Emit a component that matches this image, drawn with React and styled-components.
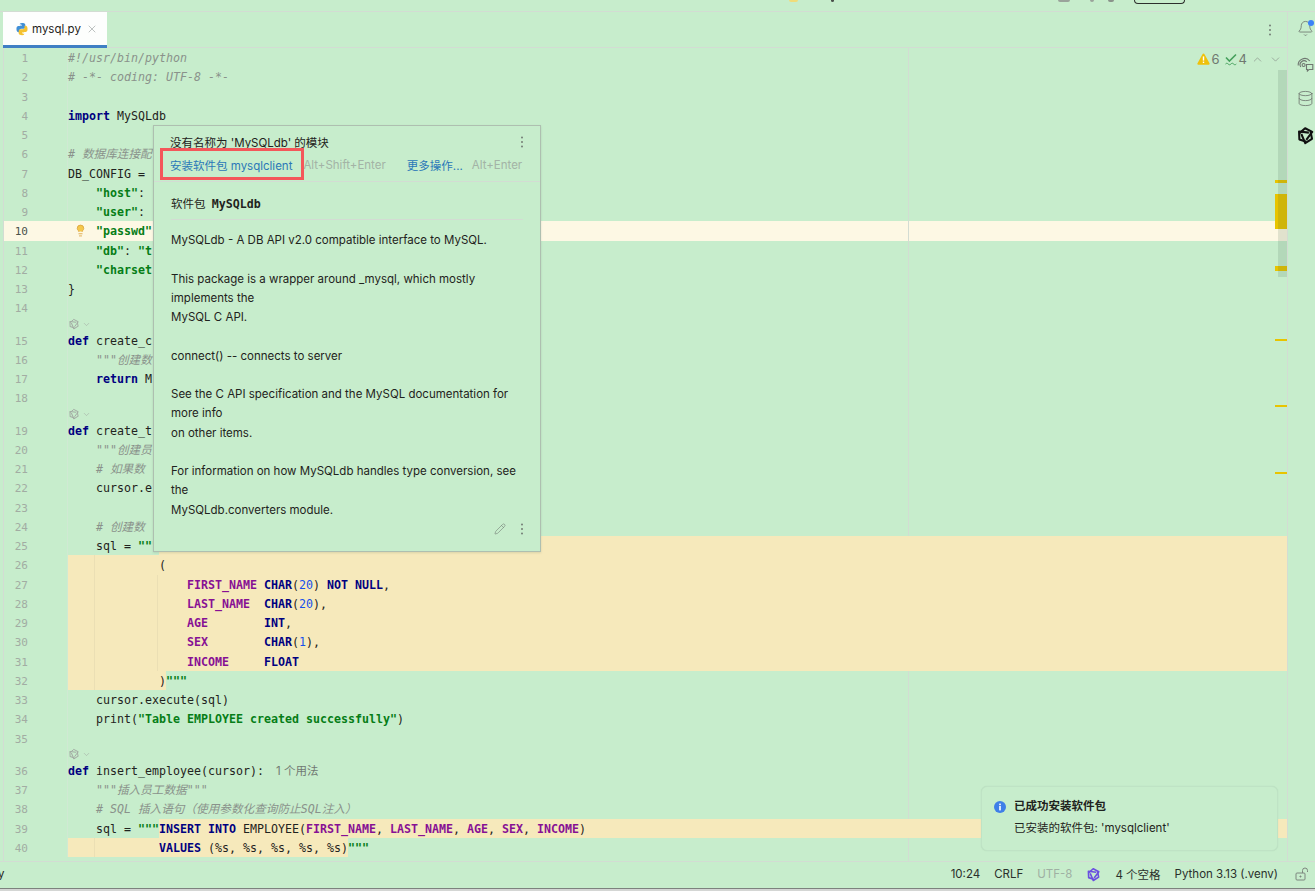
import React from "react"
import styled, { createGlobalStyle, css } from "styled-components"
import { Bell, Database, Lightbulb, Pencil, ChevronUp, ChevronDown, X } from "lucide-react"

const BG = "#c7edcc"
const LINE = "#d3dcd3"
const INJECT = "#f6e9bb"
const SANS = `Inter, "Noto Sans CJK SC", sans-serif`
const MONO = `"DejaVu Sans Mono", "Noto Sans CJK SC", monospace`

const GlobalStyle = createGlobalStyle`
  html, body {
    margin: 0;
    padding: 0;
    background: ${BG};
  }
`

const Window = styled.div`
  width: 1315px;
  height: 891px;
  display: flex;
  flex-direction: column;
  overflow: hidden;
  background: ${BG};
  color: #1f2320;
  font-family: ${SANS};
  font-size: 11.5px;
`

const TopStrip = styled.div`
  height: 11px;
  flex: none;
  display: flex;
  align-items: flex-start;
  padding-left: 789px;
  border-bottom: 1px solid ${LINE};
`

const CutOff = styled.span`
  display: block;
  flex: none;
  width: ${props => props.$w}px;
  height: ${props => props.$h}px;
  margin-left: ${props => props.$gap}px;
  background: ${props => props.$c};
  border-radius: 0 0 3px 3px;
`

const CutButton = styled.span`
  display: block;
  flex: none;
  width: 49px;
  height: 3px;
  margin-left: 20px;
  border: 1px solid #2c2f2c;
  border-top: none;
  border-radius: 0 0 8px 8px;
`

const Main = styled.div`
  flex: 1;
  min-height: 0;
  display: flex;
`

const EditorColumn = styled.div`
  flex: none;
  width: 1284px;
  margin-left: 3px;
  box-sizing: border-box;
  display: flex;
  flex-direction: column;
  border-left: 1px solid ${LINE};
  min-height: 0;
`

const TabBar = styled.div`
  height: 35px;
  flex: none;
  display: flex;
  justify-content: space-between;
  align-items: stretch;
  padding-right: 15px;
  border-bottom: 1px solid ${LINE};
`

const Tab = styled.div`
  width: 104px;
  box-sizing: border-box;
  margin-left: -1px;
  margin-bottom: -1px;
  padding: 0 9px 0 12px;
  display: flex;
  align-items: center;
  background: #fdfefd;
  border-bottom: 3px solid #3f7fc4;
`

const TabName = styled.span`
  margin-left: 3px;
  flex: 1;
`

const TabMenu = styled.div`
  display: flex;
  align-items: center;
`

const Editor = styled.div`
  position: relative;
  flex: 1;
  min-height: 0;
  overflow: hidden;
`

const Row = styled.div`
  position: relative;
  height: 19.25px;
  display: flex;
  font-family: ${MONO};
  font-size: 11.63px;
  line-height: 21px;
  white-space: pre;
  ${props => props.$caret && css`
    background: #fdf8e4;
  `}
  ${props => props.$lift && css`
    z-index: 1;
  `}
`

const Gutter = styled.div`
  flex: none;
  width: 64px;
  box-sizing: border-box;
  padding-right: 39px;
  text-align: right;
  font-size: 11px;
  color: ${props => (props.$active ? "#4a524b" : "#a2aca3")};
  border-right: 1px solid ${props => (props.$active ? "transparent" : "#d0e9d3")};
`

const guideBackground = levels => {
  if (!levels) return ""
  const stops = [27, 90].slice(0, levels)
  return css`
    background-image: ${stops
      .map(() => `linear-gradient(#ebdfb4, #ebdfb4)`)
      .join(", ")};
    background-size: 1px 100%;
    background-repeat: no-repeat;
    background-position: ${stops.map(x => `${x - 1}px 0`).join(", ")};
  `
}

const Code = styled.div`
  flex: 1;
  min-width: 0;
  display: flex;
  ${props => props.$inject && css`
    background-color: ${INJECT};
  `}
  ${props => guideBackground(props.$guides)}
`

const Fill = styled.div`
  flex: 1;
  background: ${INJECT};
`

const TOKEN_STYLES = {
  kw: css`
    color: #000080;
    font-weight: 700;
  `,
  str: css`
    color: #067d17;
    font-weight: 700;
  `,
  com: css`
    color: #8a928b;
    font-style: italic;
  `,
  col: css`
    color: #871094;
    font-weight: 700;
  `,
  num: css`
    color: #1750eb;
  `,
}

const Tok = styled.span`
  ${props => TOKEN_STYLES[props.$k]}
  ${props => props.$mark && css`
    background-color: ${INJECT};
  `}
  ${props => guideBackground(props.$guides)}
`

const Usage = styled.span`
  margin-left: 12px;
  font-family: ${SANS};
  font-size: 11.5px;
  color: #727a73;
`

const Bulb = styled.span`
  position: absolute;
  left: 70px;
  top: 3px;
  display: flex;
`

const HintRow = styled.div`
  height: 13px;
  display: flex;
`

const HintGutter = styled.div`
  flex: none;
  width: 64px;
  box-sizing: border-box;
  border-right: 1px solid #d0e9d3;
`

const HintIcon = styled.div`
  display: flex;
  align-items: center;
  gap: 2px;
  color: #a3aca4;
`

const MarginGuide = styled.div`
  position: absolute;
  left: 904px;
  top: 0;
  bottom: 0;
  width: 1px;
  background: ${LINE};
`

const StripeMark = styled.div`
  position: absolute;
  left: 1271px;
  right: 0;
  top: ${props => props.$top}px;
  height: ${props => props.$h}px;
  background: #e8c400;
  z-index: 2;
`

const ScrollThumb = styled.div`
  position: absolute;
  right: 0;
  top: 22px;
  width: 9px;
  height: 207px;
  background: rgba(60, 90, 70, 0.14);
  z-index: 3;
`

const Inspections = styled.div`
  position: absolute;
  top: 3px;
  right: 5px;
  display: flex;
  align-items: center;
  height: 16px;
  font-size: 13px;
  color: #6f7870;
  z-index: 3;
`

const Count = styled.span`
  margin: 0 ${props => props.$after}px 0 2px;
`

const Arrow = styled.span`
  display: flex;
  margin-left: ${props => props.$gap}px;
  color: #8a938b;
`

const Popup = styled.div`
  position: absolute;
  left: 149px;
  top: 77px;
  z-index: 4;
  width: 388px;
  height: 427px;
  box-sizing: border-box;
  background: ${BG};
  border: 1px solid #aebfb0;
  box-shadow: 0 1px 2px rgba(60, 80, 60, 0.15);
`

const PopupHead = styled.div`
  height: 56px;
  box-sizing: border-box;
  padding: 6px 16px 0 16px;
  border-bottom: 1px solid ${LINE};
`

const TitleLine = styled.div`
  display: flex;
  justify-content: space-between;
  align-items: center;
  height: 19px;
`

const ActionLine = styled.div`
  display: flex;
  align-items: center;
  height: 19px;
  margin-top: 4px;
  white-space: nowrap;
`

const ActionLink = styled.span`
  color: #2b78b8;
  margin-left: ${props => props.$gap || 0}px;
`

const Shortcut = styled.span`
  color: #a3b3a6;
  margin-left: ${props => props.$gap}px;
`

const Annotation = styled.div`
  position: absolute;
  left: 6px;
  top: 22px;
  width: 144px;
  height: 32px;
  box-sizing: border-box;
  border: 3px solid #f4575a;
`

const PopupDoc = styled.div`
  padding: 13px 17px 0 17px;
`

const DocHeading = styled.div`
  height: 24px;
  line-height: 19px;
  border-bottom: 1px solid ${LINE};
`

const DocModule = styled.span`
  margin-left: 3px;
  font-family: ${MONO};
  font-weight: 700;
  font-size: 11.63px;
`

const DocBody = styled.div`
  margin-top: 11px;
  width: 352px;
  line-height: 19.25px;
  white-space: pre-line;
`

const PopupFoot = styled.div`
  display: flex;
  justify-content: flex-end;
  align-items: center;
  gap: 14px;
  height: 19px;
  padding-right: 16px;
  color: #747d75;
`

const Notification = styled.div`
  position: absolute;
  left: 977px;
  bottom: 10px;
  z-index: 4;
  width: 297px;
  height: 65px;
  box-sizing: border-box;
  padding: 11px 12px;
  display: flex;
  gap: 8px;
  background: ${BG};
  border: 1px solid #bfe3c5;
  border-radius: 6px;
  box-shadow: 0 0 1px rgba(90, 130, 100, 0.2);
`

const NotifyBody = styled.div`
  display: flex;
  flex-direction: column;
  gap: 5px;
  line-height: 17px;
`

const NotifyTitle = styled.div`
  font-weight: 700;
`

const Sidebar = styled.div`
  flex: 1;
  box-sizing: border-box;
  border-left: 1px solid ${LINE};
  display: flex;
  flex-direction: column;
  align-items: center;
  padding: 8px 0 0 7px;
  gap: 18.5px;
  color: #6f7770;
`

const BellWrap = styled.div`
  position: relative;
  display: flex;
`

const BellDot = styled.span`
  position: absolute;
  right: 0;
  top: 0;
  width: 6px;
  height: 6px;
  border-radius: 50%;
  background: #3b82f6;
`

const StatusBar = styled.div`
  height: 27px;
  flex: none;
  box-sizing: border-box;
  display: flex;
  align-items: center;
  justify-content: space-between;
  padding: 0 6px 2px 0;
  border-top: 1px solid ${LINE};
`

const Crumb = styled.span`
  margin-left: -2px;
`

const StatusItems = styled.div`
  display: flex;
  align-items: center;
  gap: 14px;
`

const StatusText = styled.span`
  color: ${props => (props.$muted ? "#9fb0a3" : "#2a2f2b")};
`

const LockSlot = styled.span`
  display: flex;
  margin-left: 3px;
`

const BottomEdge = styled.div`
  height: 3px;
  flex: none;
  box-sizing: border-box;
  background: #d4d6d4;
  border-top: 1px solid #7d827e;
`

const SNAKE =
  "M11.9 1.5C8.2 1.5 8.4 3.2 8.4 3.2v2.9H12v.8H6.2S2.5 6.5 2.5 12s3.2 5.4 3.2 5.4h2v-2.8s-.1-3.2 3.2-3.2h3.6s3.1.05 3.1-3V4.6s.5-3.1-5.7-3.1zM9.9 3.3a1 1 0 1 1 0 2.1 1 1 0 0 1 0-2.1z"

const PythonLogo = () => (
  <svg width="14" height="14" viewBox="0 0 24 24">
    <path fill="#3f8fd6" d={SNAKE} />
    <path fill="#f4c230" transform="rotate(180 12 12)" d={SNAKE} />
  </svg>
)

const KebabIcon = () => (
  <svg width="4" height="12" viewBox="0 0 4 12" fill="#747d75">
    <circle cx="2" cy="1.5" r="1" />
    <circle cx="2" cy="6" r="1" />
    <circle cx="2" cy="10.5" r="1" />
  </svg>
)

const WarningIcon = () => (
  <svg width="13" height="12" viewBox="0 0 13 12">
    <path d="M6.5.5c.5 0 .8.3 1 .7l5 9c.4.7 0 1.500-.8 1.500H1.300c-.8 0-1.200-.8-.8-1.500l5-9c.2-.4.5-.7 1-.7z" fill="#efc10a" />
    <rect x="5.800" y="3.400" width="1.400" height="4.200" fill="#fff" />
    <rect x="5.800" y="8.600" width="1.400" height="1.400" fill="#fff" />
  </svg>
)

const TypoCheckIcon = () => (
  <svg width="12" height="13" viewBox="0 0 12 13" fill="none" stroke="#45a05c" strokeWidth="1.600">
    <path d="M1 4.500 4.400 8 11 1.500" />
    <path d="M.5 11c1-1 1.700-1 2.700 0s1.700 1 2.700 0 1.700-1 2.700 0 1.700 1 2.700 0" strokeWidth="1" />
  </svg>
)

const InfoIcon = () => (
  <svg width="12" height="12" viewBox="0 0 12 12" style={{ flex: "none", marginTop: 3 }}>
    <circle cx="6" cy="6" r="6" fill="#3f7fe8" />
    <rect x="5.200" y="5" width="1.600" height="4.400" fill="#fff" />
    <rect x="5.200" y="2.600" width="1.600" height="1.600" fill="#fff" />
  </svg>
)

// one blade repeated three times makes the pinwheel of the plugin logo
const LingmaIcon = ({ size = 19, color = "#111", weight = 2.6 }) => (
  <svg width={size} height={size} viewBox="0 0 24 24" fill="none" stroke={color} strokeWidth={weight} strokeLinejoin="round">
    {[0, 120, 240].map(angle => (
      <path key={angle} d="M4.500 9 11.500 2.800 20.500 7.500 13 17.500" transform={`rotate(${angle} 12 12)`} />
    ))}
  </svg>
)

const ChatIcon = () => (
  <svg width="17" height="16" viewBox="0 0 17 16" fill="none" stroke="currentColor" strokeWidth="1.100">
    <path d="M1.200 9.500A6.500 6.500 0 0 1 12.800 5" />
    <path d="M3.800 11A4 4 0 0 1 9.800 5.800" />
    <circle cx="6.600" cy="9" r="1.500" />
    <path d="M9.500 8.500h6.300v5H12l-1.600 1.500v-1.500H9.500z" />
  </svg>
)

const LockIcon = () => (
  <svg width="14" height="14" viewBox="0 0 14 14" fill="none" stroke="#7d867e" strokeWidth="1">
    <rect x="1" y="6" width="9" height="7" rx="1" />
    <path d="M7.500 6V3.500a2.500 2.500 0 0 1 5 0V5" />
    <circle cx="5.500" cy="9.500" r=".6" fill="#7d867e" />
  </svg>
)

const t = (text, k, extra) => ({ text, k, ...extra })

const rows = [
  { n: 1, parts: [t("#!/usr/bin/python", "com")] },
  { n: 2, parts: [t("# -*- coding: UTF-8 -*-", "com")] },
  { n: 3 },
  { n: 4, parts: [t("import", "kw"), t(" MySQLdb")] },
  { n: 5 },
  { n: 6, parts: [t("# 数据库连接配", "com")] },
  { n: 7, parts: [t("DB_CONFIG =")] },
  { n: 8, parts: [t("    "), t('"host"', "str"), t(":")] },
  { n: 9, parts: [t("    "), t('"user"', "str"), t(":")] },
  { n: 10, caret: true, parts: [t("    "), t('"passwd"', "str")] },
  { n: 11, parts: [t("    "), t('"db"', "str"), t(": "), t('"t', "str")] },
  { n: 12, parts: [t("    "), t('"charset', "str")] },
  { n: 13, parts: [t("}")] },
  { n: 14 },
  { hint: true },
  { n: 15, parts: [t("def", "kw"), t(" create_c")] },
  { n: 16, parts: [t("    "), t('"""创建数', "com")] },
  { n: 17, parts: [t("    "), t("return", "kw"), t(" M")] },
  { n: 18 },
  { hint: true },
  { n: 19, parts: [t("def", "kw"), t(" create_t")] },
  { n: 20, parts: [t("    "), t('"""创建员', "com")] },
  { n: 21, parts: [t("    "), t("# 如果数", "com")] },
  { n: 22, parts: [t("    cursor.e")] },
  { n: 23 },
  { n: 24, parts: [t("    "), t("# 创建数", "com")] },
  { n: 25, fill: true, parts: [t("    sql = "), t('"""', "str")] },
  { n: 26, inject: true, guides: 1, parts: [t("             (")] },
  {
    n: 27,
    inject: true,
    guides: 2,
    parts: [
      t("                 "),
      t("FIRST_NAME", "col"),
      t(" "),
      t("CHAR", "kw"),
      t("("),
      t("20", "num"),
      t(") "),
      t("NOT NULL", "kw"),
      t(","),
    ],
  },
  {
    n: 28,
    inject: true,
    guides: 2,
    parts: [t("                 "), t("LAST_NAME", "col"), t("  "), t("CHAR", "kw"), t("("), t("20", "num"), t("),")],
  },
  { n: 29, inject: true, guides: 2, parts: [t("                 "), t("AGE", "col"), t("        "), t("INT", "kw"), t(",")] },
  {
    n: 30,
    inject: true,
    guides: 2,
    parts: [t("                 "), t("SEX", "col"), t("        "), t("CHAR", "kw"), t("("), t("1", "num"), t("),")],
  },
  { n: 31, inject: true, guides: 2, parts: [t("                 "), t("INCOME", "col"), t("     "), t("FLOAT", "kw")] },
  { n: 32, parts: [t("             )", null, { mark: true, guides: 1 }), t('"""', "str")] },
  { n: 33, parts: [t("    cursor.execute(sql)")] },
  { n: 34, parts: [t("    print("), t('"Table EMPLOYEE created successfully"', "str"), t(")")] },
  { n: 35 },
  { hint: true },
  { n: 36, usage: "1 个用法", parts: [t("def", "kw"), t(" insert_employee(cursor):")] },
  { n: 37, parts: [t("    "), t('"""插入员工数据"""', "com")] },
  { n: 38, parts: [t("    "), t("# SQL 插入语句（使用参数化查询防止SQL注入）", "com")] },
  {
    n: 39,
    parts: [t("    sql = "), t('"""', "str")],
    fill: [
      t("INSERT INTO", "kw"),
      t(" EMPLOYEE("),
      t("FIRST_NAME", "col"),
      t(", "),
      t("LAST_NAME", "col"),
      t(", "),
      t("AGE", "col"),
      t(", "),
      t("SEX", "col"),
      t(", "),
      t("INCOME", "col"),
      t(")"),
    ],
  },
  {
    n: 40,
    parts: [
      t("    ", null, { mark: true, guides: 1 }),
      t("         ", null, { mark: true }),
      t("VALUES", "kw", { mark: true }),
      t(" (%s, %s, %s, %s, %s)", null, { mark: true }),
      t('"""', "str"),
    ],
  },
]

const stripeMarks = [
  [132, 3],
  [146, 35],
  [218, 5],
  [291, 2],
  [357, 2],
  [424, 2],
]

const docText = `MySQLdb - A DB API v2.0 compatible interface to MySQL.

This package is a wrapper around _mysql, which mostly implements the
MySQL C API.

connect() -- connects to server

See the C API specification and the MySQL documentation for more info
on other items.

For information on how MySQLdb handles type conversion, see the
MySQLdb.converters module.`

const renderParts = parts =>
  parts.map((part, i) => (
    <Tok key={i} $k={part.k} $mark={part.mark} $guides={part.guides}>
      {part.text}
    </Tok>
  ))

const CodeRow = ({ row }) => {
  if (row.hint) {
    return (
      <HintRow>
        <HintGutter />
        <HintIcon>
          <LingmaIcon size={12} color="#a3aca4" weight={2} />
          <ChevronDown size={9} strokeWidth={1.5} />
        </HintIcon>
      </HintRow>
    )
  }
  return (
    <Row $caret={row.caret} $lift={row.inject || row.fill}>
      <Gutter $active={row.caret}>{row.n}</Gutter>
      <Code $inject={row.inject} $guides={row.guides}>
        {row.parts && renderParts(row.parts)}
        {row.usage && <Usage>{row.usage}</Usage>}
        {row.fill && <Fill>{Array.isArray(row.fill) && renderParts(row.fill)}</Fill>}
      </Code>
      {row.caret && (
        <Bulb>
          <Lightbulb size={13} color="#d9a03a" fill="#f5c84c" strokeWidth={1.5} />
        </Bulb>
      )}
    </Row>
  )
}

const App = () => (
  <Window>
    <GlobalStyle />
    <TopStrip>
      <CutOff $w={9} $h={2} $gap={0} $c="#f0dc7a" />
      <CutOff $w={3} $h={2} $gap={33} $c="#4a504b" />
      <CutOff $w={12} $h={2} $gap={224} $c="#9aa39b" />
      <CutOff $w={4} $h={2} $gap={20} $c="#9aa39b" />
      <CutOff $w={6} $h={2} $gap={14} $c="#8a938b" />
      <CutButton />
    </TopStrip>
    <Main>
      <EditorColumn>
        <TabBar>
          <Tab>
            <PythonLogo />
            <TabName>mysql.py</TabName>
            <X size={12} color="#9aa0a0" strokeWidth={1.3} />
          </Tab>
          <TabMenu>
            <KebabIcon />
          </TabMenu>
        </TabBar>
        <Editor>
          {rows.map((row, i) => (
            <CodeRow key={i} row={row} />
          ))}
          <MarginGuide />
          {stripeMarks.map(([top, h]) => (
            <StripeMark key={top} $top={top} $h={h} />
          ))}
          <ScrollThumb />
          <Inspections>
            <WarningIcon />
            <Count $after={5}>6</Count>
            <TypoCheckIcon />
            <Count $after={0}>4</Count>
            <Arrow $gap={4}>
              <ChevronUp size={13} strokeWidth={1.3} />
            </Arrow>
            <Arrow $gap={5}>
              <ChevronDown size={13} strokeWidth={1.3} />
            </Arrow>
          </Inspections>
          <Popup>
            <PopupHead>
              <TitleLine>
                <span>没有名称为 'MySQLdb' 的模块</span>
                <KebabIcon />
              </TitleLine>
              <ActionLine>
                <ActionLink>安装软件包 mysqlclient</ActionLink>
                <Shortcut $gap={11}>Alt+Shift+Enter</Shortcut>
                <ActionLink $gap={21}>更多操作...</ActionLink>
                <Shortcut $gap={9}>Alt+Enter</Shortcut>
              </ActionLine>
              <Annotation />
            </PopupHead>
            <PopupDoc>
              <DocHeading>
                软件包 <DocModule>MySQLdb</DocModule>
              </DocHeading>
              <DocBody>{docText}</DocBody>
            </PopupDoc>
            <PopupFoot>
              <Pencil size={12} strokeWidth={1.2} />
              <KebabIcon />
            </PopupFoot>
          </Popup>
          <Notification>
            <InfoIcon />
            <NotifyBody>
              <NotifyTitle>已成功安装软件包</NotifyTitle>
              <div>已安装的软件包: 'mysqlclient'</div>
            </NotifyBody>
          </Notification>
        </Editor>
      </EditorColumn>
      <Sidebar>
        <BellWrap>
          <Bell size={17} strokeWidth={1.2} />
          <BellDot />
        </BellWrap>
        <ChatIcon />
        <Database size={17} strokeWidth={1.2} />
        <LingmaIcon />
      </Sidebar>
    </Main>
    <StatusBar>
      <Crumb>y</Crumb>
      <StatusItems>
        <StatusText>10:24</StatusText>
        <StatusText>CRLF</StatusText>
        <StatusText $muted>UTF-8</StatusText>
        <LingmaIcon size={15} color="#6a4fe0" weight={2.6} />
        <StatusText>4 个空格</StatusText>
        <StatusText>Python 3.13 (.venv)</StatusText>
        <LockSlot>
          <LockIcon />
        </LockSlot>
      </StatusItems>
    </StatusBar>
    <BottomEdge />
  </Window>
)

export default App
